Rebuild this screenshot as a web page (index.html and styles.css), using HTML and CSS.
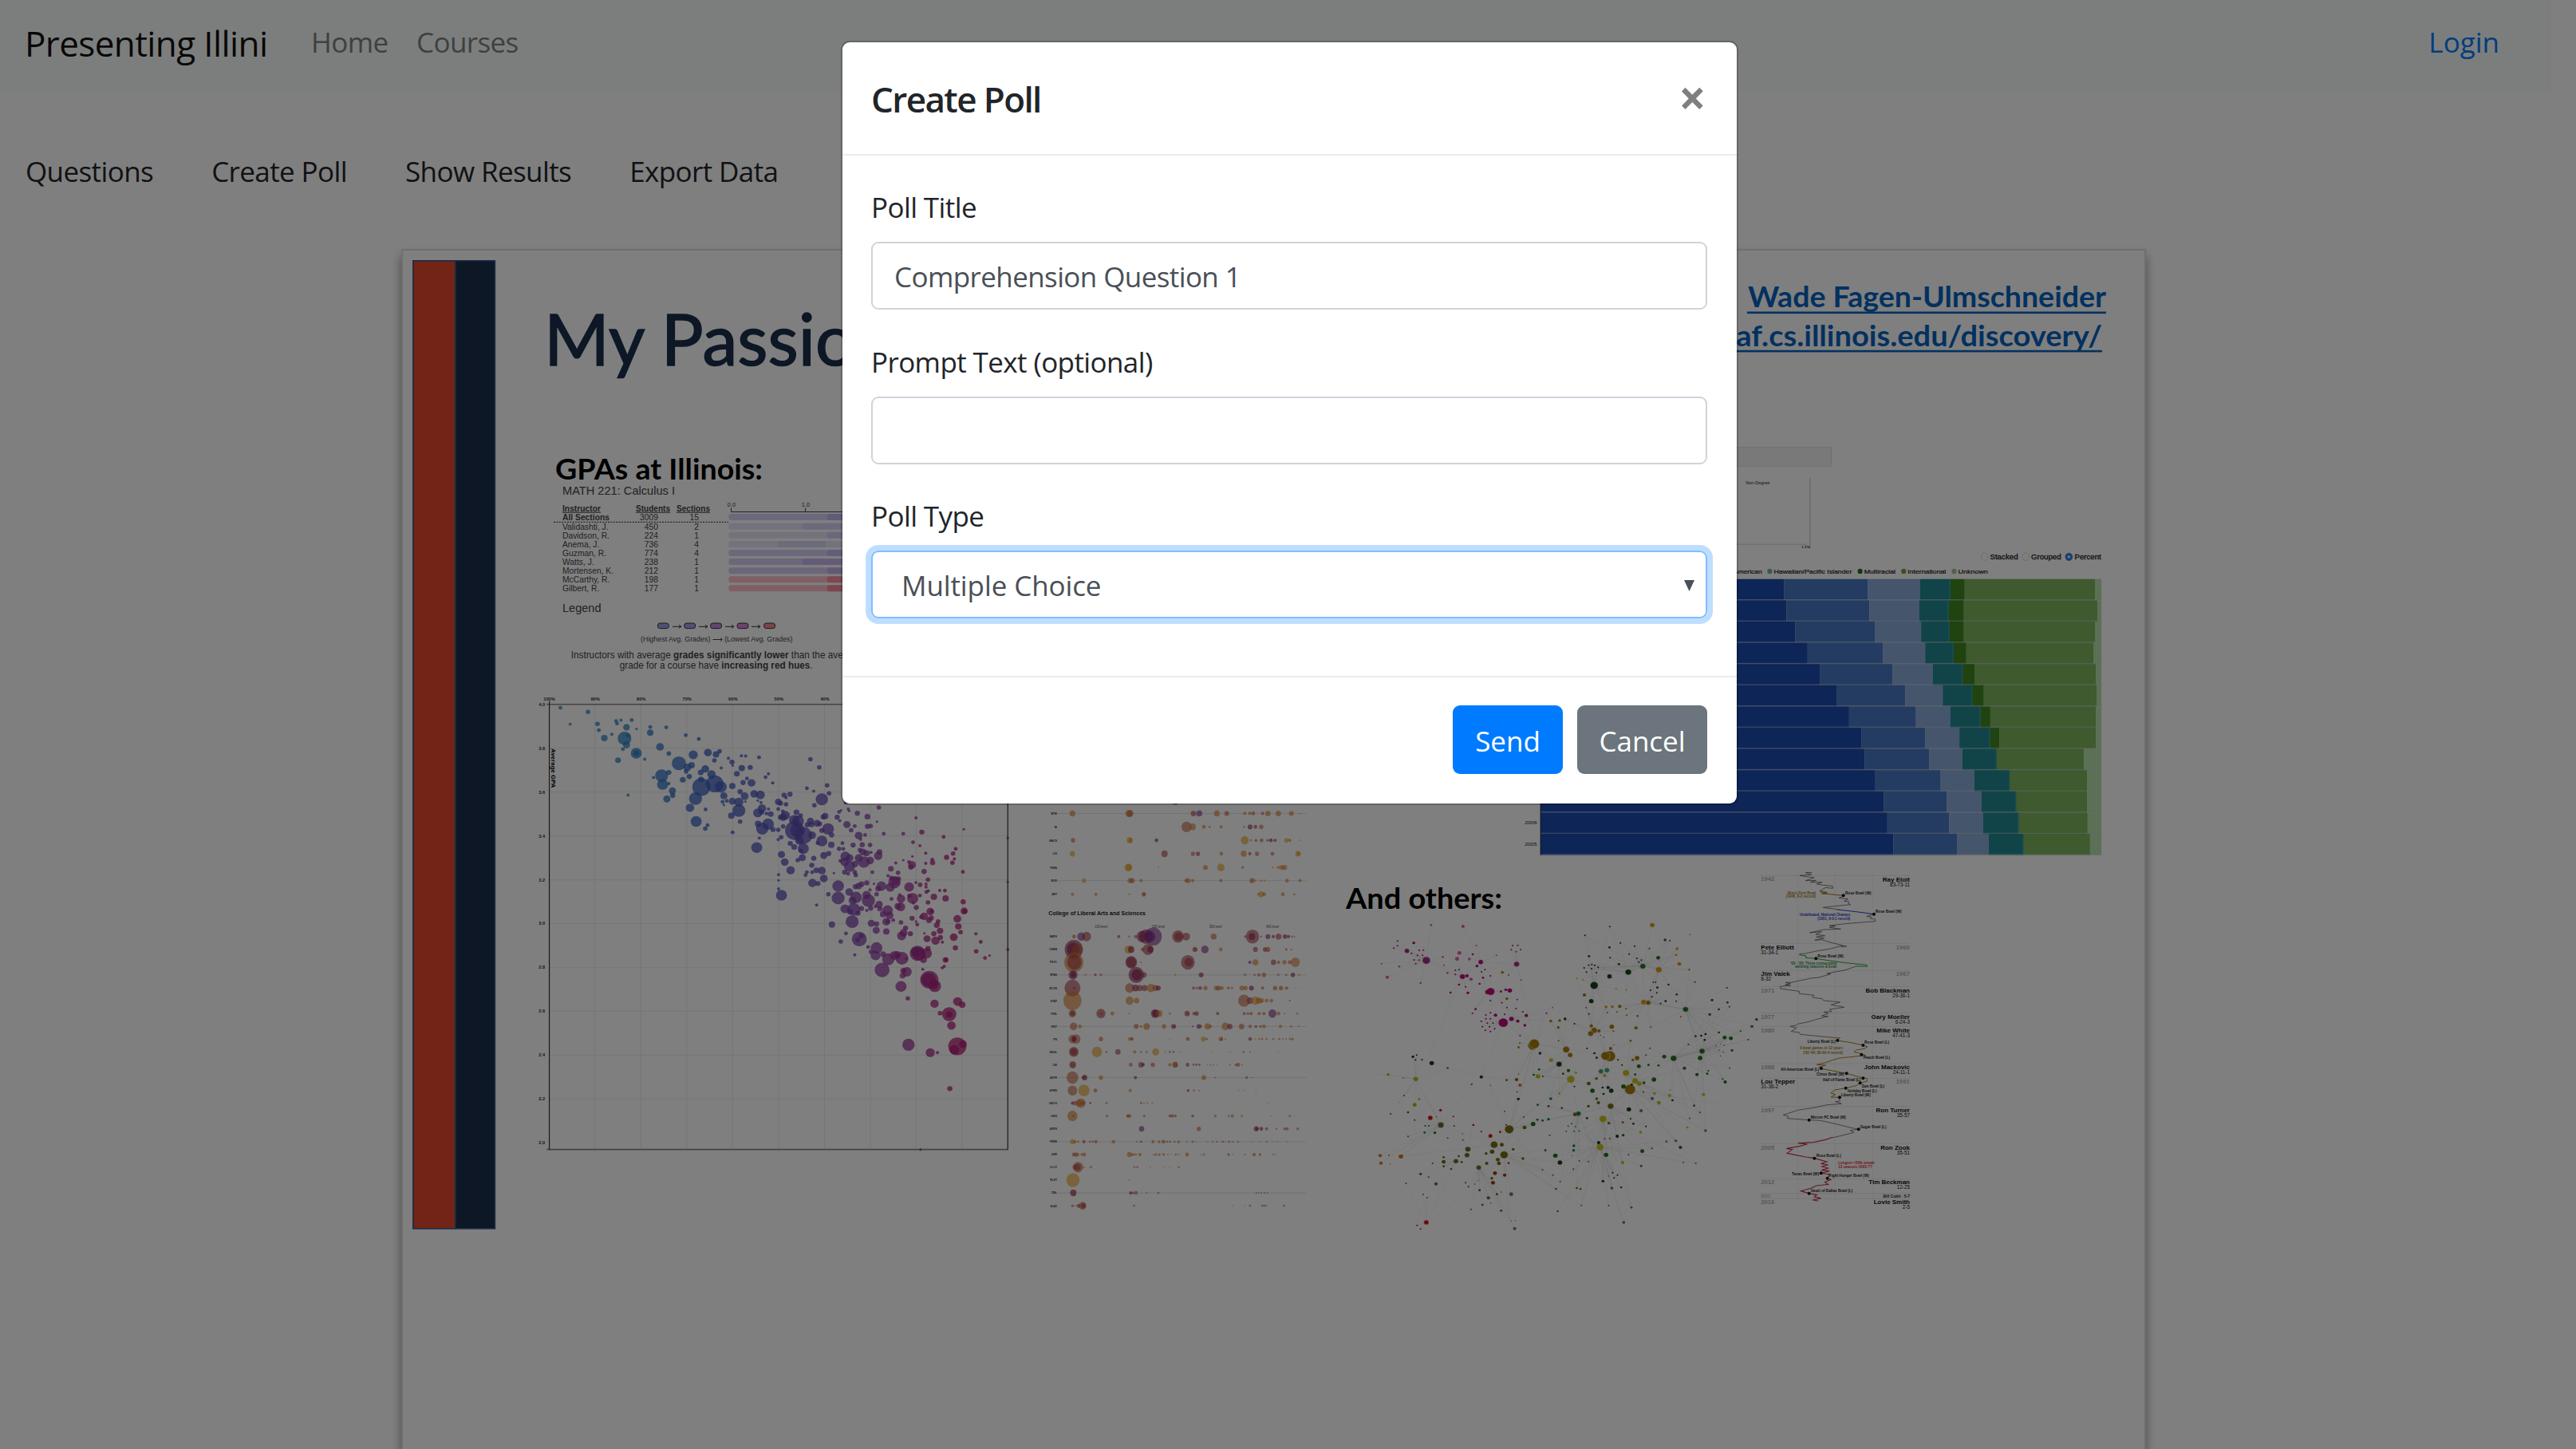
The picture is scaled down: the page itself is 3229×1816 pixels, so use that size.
FILE: index.html
```html
<!DOCTYPE html>
<html lang="en">
<head>
<meta charset="utf-8">
<title>Presenting Illini</title>
<link rel="stylesheet" href="styles.css">
</head>
<body>
<nav class="navbar">
  <a class="brand">Presenting Illini</a>
  <a class="nav-link">Home</a>
  <a class="nav-link">Courses</a>
  <a class="login">Login</a>
</nav>
<div class="tabs">
  <a>Questions</a>
  <a>Create Poll</a>
  <a>Show Results</a>
  <a>Export Data</a>
</div>
<main class="slide">
<svg class="canvas" viewBox="505 314 2183 1502" width="2183" height="1502">
  <rect x="517.8" y="326.8" width="53" height="1213" fill="#e5482d" stroke="#35598a" stroke-width="1.6"/>
  <rect x="571" y="326.8" width="49.4" height="1213" fill="#1a2f4b" stroke="#35598a" stroke-width="1.6"/>

  <g class="calibri">
    <text x="682" y="458" font-size="90" fill="#1a2f4b" stroke="#1a2f4b" stroke-width="1.6" textLength="390" lengthAdjust="spacingAndGlyphs">My Passio</text>
    <g font-weight="700">
      <text x="696" y="601" font-size="35.4" textLength="260" lengthAdjust="spacingAndGlyphs">GPAs at Illinois:</text>
      <text x="1687" y="1138.7" font-size="35.4" textLength="196" lengthAdjust="spacingAndGlyphs">And others:</text>
      <g fill="#0563c1" font-size="36">
        <text x="2191" y="385" textLength="449" lengthAdjust="spacingAndGlyphs">Wade Fagen-Ulmschneider</text>
        <text x="2146" y="433.8" textLength="489" lengthAdjust="spacingAndGlyphs">waf.cs.illinois.edu/discovery/</text>
        <rect x="2190" y="390.5" width="450" height="2.6"/>
        <rect x="2148" y="438.8" width="487" height="2.6"/>
      </g>
    </g>
  </g>

  <g class="arial" id="gpa" fill="#444">
    <text x="705" y="620" font-size="15" textLength="141" lengthAdjust="spacingAndGlyphs">MATH 221: Calculus I</text>
    <g font-size="10.5" font-weight="700" text-decoration="underline">
      <text x="705" y="640.7" textLength="48" lengthAdjust="spacingAndGlyphs">Instructor</text>
      <text x="797" y="640.7" textLength="43" lengthAdjust="spacingAndGlyphs">Students</text>
      <text x="848" y="640.7" textLength="42" lengthAdjust="spacingAndGlyphs">Sections</text>
    </g>
    <path d="M694 654.3H913" stroke="#222" stroke-width="1" stroke-dasharray="2 1.4"/>
    <path d="M916.5 636.5V641.5H1080M1009.6 636.5V641.5" stroke="#444" stroke-width="1" fill="none"/>
    <g font-size="7.5" text-anchor="middle"><text x="917" y="635">0.0</text><text x="1010" y="635">1.0</text></g>
    <text x="705" y="767" font-size="14.6" textLength="48.5" lengthAdjust="spacingAndGlyphs">Legend</text>
    <g stroke="#333" stroke-width="1">
      <rect x="824.4" y="781" width="14" height="6.6" rx="3" fill="#9ea0ec"/>
      <rect x="857.7" y="781" width="14" height="6.6" rx="3" fill="#b09ce6"/>
      <rect x="890.6" y="781" width="14" height="6.6" rx="3" fill="#c88ade"/>
      <rect x="924" y="781" width="14" height="6.6" rx="3" fill="#dc82dc"/>
      <rect x="957.6" y="781" width="14" height="6.6" rx="3" fill="#f48a96"/>
      <path fill="none" d="M843 785.3h11m-3-2l3 2l-3 2M876 785.3h11m-3-2l3 2l-3 2M909 785.3h11m-3-2l3 2l-3 2M942 785.3h11m-3-2l3 2l-3 2"/>
    </g>
    <text x="803" y="804" font-size="9" textLength="190.5" lengthAdjust="spacingAndGlyphs">(Highest Avg. Grades) ⟶ (Lowest Avg. Grades)</text>
    <text x="715.7" y="824.8" font-size="12.2" textLength="341" lengthAdjust="spacingAndGlyphs">Instructors with average <tspan font-weight="700">grades significantly lower</tspan> than the ave</text>
    <text x="776.7" y="837.5" font-size="12.2" textLength="242" lengthAdjust="spacingAndGlyphs">grade for a course have <tspan font-weight="700">increasing red hues</tspan>.</text>
  </g>

  <g class="arial" id="scatter" transform="translate(660 840) scale(.40816 .39542)"></g>
  <g class="arial" id="bubbles" transform="translate(1290 990) scale(.33333 .35075)"></g>
  <g id="network" transform="translate(1660 1060) scale(.35714 .33333)"></g>
  <g class="arial" id="enrollment" transform="translate(1900 530) scale(.5102 .35714)"></g>
  <g class="arial" id="football" transform="translate(2180 1070) scale(.33333)"></g>
</svg>
</main>

<div class="backdrop">
  <section class="modal">
    <header class="modal-header">
      <h5>Create Poll</h5>
      <span class="close">×</span>
    </header>
    <div class="modal-body">
      <label>Poll Title</label>
      <div class="control"><span>Comprehension Question 1</span></div>
      <label>Prompt Text (optional)</label>
      <div class="control"></div>
      <label>Poll Type</label>
      <div class="control select"><span>Multiple Choice</span><svg width="13" height="14" viewBox="0 0 13 14"><path d="M0 0H13L6.5 14Z" fill="#495057"/></svg></div>
    </div>
    <footer class="modal-footer">
      <button class="btn send">Send</button>
      <button class="btn cancel">Cancel</button>
    </footer>
  </section>
</div>
<script src="charts.js"></script>
</body>
</html>
```
FILE: styles.css
```css
* { box-sizing: border-box; }
html, body { margin: 0; height: 1816px; overflow: hidden; }
body {
  background: #fff;
  color: #212529;
  font-family: "Open Sans", "Noto Sans", sans-serif;
  font-stretch: 92%;
  font-size: 35px;
  line-height: 54px;
  letter-spacing: -.6px;
}
.navbar {
  display: flex;
  align-items: center;
  width: 3198px;
  height: 114px;
  padding: 0 65px 8px 31px;
  background: #f8fcfa;
}
.brand { width: 359px; font-size: 44px; color: #111; padding-top: 1px; }
.nav-link { width: 132px; color: #808080; white-space: nowrap; }
.login { margin-left: auto; color: #007bff; letter-spacing: 0; }
.tabs {
  display: flex;
  gap: 73px;
  padding: 74px 0 0 32px;
  height: 198px;
}
.slide {
  width: 2187px;
  height: 1504px;
  margin-left: 503px;
  border: 2px solid #dedede;
  border-bottom: 0;
  box-shadow: 0 9px 12px rgba(0, 0, 0, .42);
}
.canvas { display: block; }
.calibri { font-family: Lato, sans-serif; letter-spacing: 0; }
.arial { font-family: "Liberation Sans", Arial, sans-serif; letter-spacing: 0; }

.backdrop {
  position: absolute;
  inset: 0;
  background: rgba(0, 0, 0, .5);
  display: flex;
  justify-content: center;
  align-items: flex-start;
  padding: 51px 0 0 4px;
}
.modal {
  width: 1125px;
  height: 958px;
  background: #fff;
  background-clip: padding-box;
  border: 2px solid rgba(0, 0, 0, .2);
  border-radius: 11px;
}
.modal-header {
  display: flex;
  justify-content: space-between;
  align-items: center;
  height: 142px;
  padding: 0 39px 0 36px;
  border-bottom: 2px solid #e9ecef;
}
h5 { margin: 0; padding-top: 1px; font-size: 44px; font-weight: 600; letter-spacing: -1.6px; }
.close { padding-bottom: 2px; font-size: 60px; font-weight: 700; color: #7f7f7f; }
.modal-body { display: flex; flex-direction: column; height: 652px; padding: 36px 37px 0 36px; }
label { height: 72px; padding-top: 2px; }
.control {
  display: flex;
  align-items: center;
  justify-content: space-between;
  height: 85px;
  margin-bottom: 36.5px;
  padding: 2px 14px 0 27px;
  border: 2px solid #ced4da;
  border-radius: 9px;
  color: #495057;
}
.select { padding-left: 36px; border-color: #80bdff; box-shadow: 0 0 0 7px rgba(0, 123, 255, .25); letter-spacing: -.1px; }
.modal-footer {
  display: flex;
  justify-content: flex-end;
  gap: 18px;
  padding: 35px 37px 0 36px;
  border-top: 2px solid #e9ecef;
}
.btn {
  height: 86px;
  padding: 4px 0 0;
  border: 0;
  border-radius: 9px;
  color: #fff;
  font: inherit;
}
.send { width: 138px; background: #007bff; }
.cancel { width: 163px; background: #6c757d; }
```
FILE: charts.js
```js
const NS = 'http://www.w3.org/2000/svg';
function add(parent, tag, attrs, text) {
  const el = document.createElementNS(NS, tag);
  for (const k in attrs) el.setAttribute(k, attrs[k]);
  if (text !== undefined) el.textContent = text;
  parent.appendChild(el);
  return el;
}
const $ = id => document.getElementById(id);
const triples = s => s.trim().split(/\s+/).map(t => t.split(','));

// Instructor table
[['All Sections', 3009, 15, 651.8, 1036.8, '#d8d0fa', '#c0b6f6'],
 ['Validashti, J.', 450, 2, 663.6, 1005.7, '#e6e4fa', '#d6d4fa'],
 ['Davidson, R.', 224, 1, 674.6, 1036.8, '#e6e4fa', '#d4d0fa'],
 ['Anema, J.', 736, 4, 685.7, 975.4, '#e6e4fa', '#d8d6f8'],
 ['Guzman, R.', 774, 4, 696.8, 1036.8, '#d8d0f8', '#c6b8f6'],
 ['Watts, J.', 238, 1, 707.9, 1005.7, '#d8ccf4', '#ccb4f2'],
 ['Mortensen, K.', 212, 1, 719, 1036.8, '#daccf4', '#cab0ee'],
 ['McCarthy, R.', 198, 1, 730, 1036.8, '#fcc0cc', '#fa90a2'],
 ['Gilbert, R.', 177, 1, 741, 1036.8, '#fcc0c8', '#fa8c9c']
].forEach((r, i) => {
  const g = $('gpa'), y = r[3];
  add(g, 'text', { x: 705, y, 'font-size': 10.3, 'font-weight': i ? 400 : 700 }, r[0]);
  add(g, 'text', { x: 825, y, 'font-size': 10.3, 'text-anchor': 'end' }, r[1]);
  add(g, 'text', { x: 876, y, 'font-size': 10.3, 'text-anchor': 'end' }, r[2]);
  add(g, 'rect', { x: 913.4, y: y - 7.8, width: 170, height: 8, rx: 3, fill: r[5] });
  add(g, 'rect', { x: r[4], y: y - 7.8, width: 60, height: 8, rx: 3, fill: r[6] });
});

// GPA scatter
(() => {
  const g = $('scatter');
  for (let i = 1; i < 10; i++) add(g, 'path', { d: `M${69 + 141 * i} 108V1519`, stroke: '#eee', 'stroke-width': 3 });
  for (let i = 1; i < 10; i++) add(g, 'path', { d: `M69 ${108 + 139 * i}H1479`, stroke: '#eee', 'stroke-width': 3 });
  add(g, 'path', { d: 'M62 108H1479M62 1519H1479', stroke: '#888', 'stroke-width': 4 });
  add(g, 'path', { d: 'M70 98V1519M1478 108V1519', stroke: '#333', 'stroke-width': 3 });
  ['100%', '90%', '80%', '70%', '60%', '50%', '40%'].forEach((t, i) =>
    add(g, 'text', { x: 70 + 141 * i, y: 96, 'font-size': 14, 'font-weight': 700, 'text-anchor': 'middle', fill: '#333' }, t));
  for (let i = 0; i < 11; i++)
    add(g, 'text', { x: 57, y: 113 + 139 * i, 'font-size': 14, 'font-weight': 700, 'text-anchor': 'end', fill: '#333' }, (4 - .2 * i).toFixed(1));
  add(g, 'text', { transform: 'translate(75 248) rotate(90)', 'font-size': 19, 'font-weight': 700, textLength: 125, lengthAdjust: 'spacingAndGlyphs' }, 'Average GPA');
  const stops = [[300, 41, 129, 190], [560, 56, 91, 190], [850, 90, 75, 180], [1100, 145, 60, 160], [1300, 175, 28, 115], [1500, 182, 20, 105]];
  const color = x => {
    if (x <= 300) return 'rgb(41,129,190)';
    let i = 1;
    while (stops[i][0] < x) i++;
    const a = stops[i - 1], b = stops[i], t = (x - a[0]) / (b[0] - a[0]);
    return `rgb(${[1, 2, 3].map(k => Math.round(a[k] + (b[k] - a[k]) * t))})`;
  };
  triples(`
104,119,6 134,171,5 189,132,7 218,170,7 222,190,6 239,215,10 262,203,5 281,285,9 275,161,6 278,169,6 290,158,5 323,158,6 307,181,10 338,186,4 312,207,7 301,216,21 307,236,11 296,250,6 337,263,17 337,263,9 363,282,5 312,396,5 380,180,6 380,198,10 429,181,6 489,206,6 529,218,6 410,243,12 437,264,7 390,340,5 415,334,20 418,362,17 437,324,8 448,382,11 449,397,8 431,408,11 437,359,5 468,295,22 512,268,14 507,301,10 494,308,12 490,321,7 480,347,9 500,337,8 557,261,12 582,267,10 593,257,7 577,286,7 598,310,5 549,313,12 535,324,9 568,330,13 536,346,9 537,370,28 578,360,27 597,370,18 519,407,20 502,436,13 521,479,17 550,441,6 556,491,6 549,502,7 606,398,11 602,417,6 606,427,4 615,414,6
620,279,5 631,291,8 633,302,4 661,310,10 660,271,5 673,272,5 714,276,6 687,308,8 646,328,9 677,343,6 665,356,8 691,357,12 632,367,10 656,385,8 670,399,12 632,415,11 652,418,14 652,445,20 629,461,10 656,480,7 633,514,6 672,416,4 699,392,12 718,395,14 710,413,4 720,419,5 734,339,6 743,328,5 756,357,5 723,438,13 710,452,14 722,450,8 743,440,5 737,454,6 750,456,9 711,487,10 724,502,19 742,488,18 757,505,8 773,506,7 707,562,17 715,532,5 773,440,6 773,417,10 780,422,8 791,396,8 809,393,8 797,404,5 797,425,7 787,447,6 795,460,14 788,466,12 780,466,8 788,495,7 773,537,5 782,529,7 810,549,8 783,584,11 793,608,12 811,634,13 774,648,5 774,666,4 774,693,5 783,713,17
872,282,7 899,308,7 861,374,6 882,383,5 923,365,7 929,390,7 907,409,19 884,428,7 829,450,9 842,460,7 822,475,16 834,478,18 824,508,30 830,508,20 850,524,27 838,540,13 872,478,11 875,489,9 892,485,11 900,487,8 911,465,8 917,462,10 862,490,8 877,523,12 907,508,8 926,503,18 937,522,8 907,541,17 894,548,6 936,553,10 850,565,17 822,560,9 843,572,7 847,594,11 833,602,7 882,596,8 876,618,8 913,587,11 928,581,8 878,674,13 895,676,8 913,660,12 907,635,12 890,634,9 877,640,6 861,640,6 857,649,6 927,710,7 891,744,5 944,643,4 938,806,10 965,860,7
954,466,8 962,477,5 960,449,6 966,444,4 980,420,6 988,440,5 991,446,4 1016,453,8 1047,464,9 1082,435,7 1076,480,4 984,489,11 997,507,7 1008,494,6 1047,495,8 1057,494,7 1020,524,12 1040,522,6 1026,536,5 970,548,6 960,566,7 973,566,6 1003,554,8 1031,553,8 1055,554,7 1024,570,7 1033,576,11 1044,580,10 1058,577,5 1084,576,9 1080,588,13 979,590,15 992,595,12 964,604,6 977,608,13 992,622,17 1020,595,12 1036,608,18 1055,603,12 1009,614,10 977,640,8 988,645,6 1008,640,7 1011,649,7 1062,640,6 957,684,18 957,722,20 991,703,12 1012,720,18 1001,730,12 1044,712,13 1050,730,20 1010,686,8 1020,684,10 1029,678,9 1045,674,8 1055,696,5 1067,677,4 1075,710,7 1080,692,9 1090,684,15 978,756,14 1005,758,20 993,765,9 1018,770,8 1029,755,8 1045,761,5 1057,754,8 1072,748,6 1083,742,11 1085,756,8 1000,797,20 1095,773,10 1109,761,16 1115,777,12 1059,802,11 1075,804,8 1105,797,12 1110,796,7 1126,792,6 1074,824,11 1105,828,10 1022,852,23 1028,842,8 1017,855,7 981,834,6 1008,902,5 1049,877,6 1075,880,18 1058,893,7 1072,904,15 1095,900,9 1111,916,19 1130,904,14 1138,902,12 1153,913,20 1166,914,5 1092,950,23 1157,952,9 1168,956,15 1155,968,9 1150,1002,17 1171,1040,7 1173,1187,19
1097,518,6 1157,518,6 1196,468,5 1214,513,8 1281,528,6 1343,504,4 1187,545,6 1208,556,5 1226,580,5 1185,590,4 1134,611,5 1119,629,9 1141,642,7 1157,602,4 1175,608,6 1184,617,12 1180,624,8 1221,638,8 1226,612,5 1246,600,6 1247,610,8 1290,593,8 1310,581,7 1318,566,6 1314,598,5 1308,610,7 1340,639,6 1110,651,5 1120,658,7 1143,660,7 1130,672,19 1133,668,14 1117,688,14 1175,687,15 1196,673,5 1209,680,7 1227,678,5 1233,664,7 1227,687,5 1234,699,5 1228,703,6 1269,698,5 1285,698,6 1287,723,10 1251,718,10 1233,736,7 1208,714,6 1186,723,17 1176,715,7 1150,724,13 1146,712,5 1121,725,6 1149,750,14 1140,748,10 1197,752,8 1188,738,5 1240,765,12 1244,764,6 1221,780,12 1213,782,7 1236,792,9 1243,785,8 1184,786,8 1196,796,4 1200,806,6 1150,799,7 1164,817,8 1158,832,12 1152,842,14 1179,835,8 1222,834,4 1251,835,8 1264,796,7 1260,808,9 1270,826,10 1271,847,8 1230,851,11 1256,857,13 1277,862,5 1323,788,12 1326,812,10 1333,830,7 1312,846,12 1317,880,8 1341,734,8 1344,763,11 1346,764,7 1380,835,5 1395,861,6 1381,891,7 1408,912,6 1422,904,4 1478,532,4 1478,671,4 1478,885,5
1201,897,24 1206,899,20 1196,892,16 1229,897,16 1219,917,11 1233,882,8 1287,918,9 1288,918,6 1283,938,5 1277,943,5 1217,948,5 1237,981,28 1235,981,22 1254,1001,19 1250,997,15 1253,1057,13 1324,1050,14 1338,1060,10 1298,1090,22 1298,1091,10 1270,1087,7 1305,1126,13 1323,1192,28 1314,1203,15 1340,1185,12 1240,1212,14 1262,1212,5 1300,1326,8 1210,1519,4`)
    .forEach(([x, y, r]) => add(g, 'circle', { cx: x, cy: y, r, fill: color(+x), 'fill-opacity': .75 }));
})();

// Course bubbles by department
(() => {
  const g = $('bubbles');
  const hue = { y: '#e8a020', o: '#d87c28', b: '#c4603c', r: '#a83c48', m: '#8c1c4c', p: '#7a2c84' };
  const rows = {
    84: 'BTW| 163,11,o 375,13,o 380,12,b 618,10,r 640,11,p 706,11,o 743,9,b 811,6,o 830,6,o 843,7,b 878,6,b 898,10,o 937,10,o 986,9,o 1018,3,y',
    132: 'IB| 592,19,b 615,12,o 657,7,o 679,4,b 722,6,o 808,4,o 831,9,m 851,7,r 873,8,b',
    180: 'MACS| 165,8,b 378,11,y 381,8,y 479,7,p 811,15,y 834,3,r 853,5,r 874,7,b 896,5,b 909,7,m 925,6,r 967,8,y 980,6,o 1018,3,y',
    228: 'LIS| 163,10,y 509,12,r 616,8,b 635,8,r 723,7,o 807,11,o 830,6,r 857,8,b 915,7,b 1011,10,y 1014,7,y',
    277: 'THEA| 373,14,y 376,11,y 486,3,y 663,9,o 721,14,y 803,5,o 915,3,o 937,6,y 950,8,o 961,9,o',
    324: 'MUS| 206,8,y 379,9,o 388,9,b 421,6,o 590,6,b 598,9,o 615,6,o 721,6,o 838,9,b 850,5,y 872,4,y 885,4,y 970,7,o 1018,6,o',
    373: 'ART| 163,6,o 251,6,o 376,3,o 431,8,b 433,5,b 862,5,y 872,11,y 884,7,o 954,7,o 997,4,o',
    524: 'MATH| 169,7,b 196,15,p 216,17,r 337,6,r 376,4,o 400,6,b 424,20,m 440,26,m 455,20,p 467,32,p 560,22,r 562,15,r 591,14,r 694,11,b 813,5,b 840,25,r 838,12,m 872,3,m 898,9,m 918,6,m 938,11,r 962,8,m 975,6,m 988,4,b 998,3,b',
    570: 'CHEM| 168,34,m 166,24,m 182,20,b 374,15,y 384,12,m 427,7,b 447,20,r 456,12,m 623,9,r 627,6,b 661,14,p 721,7,o 851,9,r 887,8,r 898,9,b 967,4,r 986,3,r',
    616: 'PSYC| 168,36,o 170,27,r 384,22,m 384,18,r 421,3,b 597,26,r 600,16,r 830,6,p 851,11,o 919,10,r 938,6,b 960,8,o 980,7,b 1001,17,o',
    661: 'SPAN| 165,17,m 166,10,m 212,4,y 249,5,r 270,5,b 403,29,m 405,20,m 432,10,r 550,4,y 647,9,m 812,5,o 848,4,b 864,6,b 883,8,b 937,4,b 967,4,b 992,8,m 1016,4,y',
    708: 'ECON| 163,30,r 170,5,r 378,17,b 400,12,m 416,11,r 434,11,r 458,15,o 475,11,b 486,9,m 618,6,b 630,4,r 643,7,r 663,8,o 703,8,o 712,9,b 725,7,o 749,5,b 763,4,b 800,9,o 814,8,o 836,9,m 878,6,b 925,8,b 947,8,b 968,6,b 1001,2,o 1014,2,o',
    753: 'STAT| 163,34,o 378,15,o 404,10,o 808,22,b 831,12,r 851,15,y 864,11,o 875,8,o 893,7,o 911,7,o 980,3,r',
    799: 'PHIL| 163,14,b 163,9,r 270,17,r 272,6,b 313,7,o 376,3,o 474,16,m 476,12,m 489,12,o 529,4,o 594,10,r 597,6,b 620,6,r 630,8,r 709,6,r 809,6,b 823,5,b 835,6,b 865,6,b 883,6,b 915,15,p 938,7,o 960,3,o 1008,4,o',
    845: 'HIST| 167,14,b 191,7,o 403,9,b 421,5,o 442,12,o 507,8,o 543,9,r 547,5,r 615,3,r 638,8,p 645,6,b 671,11,o 682,6,o 738,14,o 755,10,r 799,10,b 831,6,b 853,5,r 870,5,b 883,7,o 945,6,o 985,4,o 1014,3,y',
    890: 'PS| 163,15,b 176,17,b 169,9,m 270,8,b 378,7,y 386,6,r 529,2,o 597,7,b 655,9,y 668,4,b 721,8,o 724,5,b 738,3,o 831,7,r 850,3,y 865,4,y 876,4,o 893,4,o 918,4,o 940,4,o 954,3,o 967,3,o 981,4,o 990,5,o',
    936: 'ENGL| 168,18,r 168,13,r 255,19,y 291,4,b 334,10,r 397,6,o 421,4,o 442,4,o 476,13,y 512,2,b 529,4,b 543,4,b 567,2,b 685,2,o 757,2,b 806,4,b 831,3,o 937,2,o',
    982: 'CW| 164,13,r 164,8,b 382,7,b 421,10,r 429,6,p 465,8,b 529,6,o 549,11,b 551,7,b 596,7,r 618,4,b 629,4,r 640,4,r 670,2,o 681,3,o 692,3,o 706,2,o 755,3,b 778,5,b 786,7,b 800,3,o',
    1028: 'ASTR| 163,22,b 209,10,m 205,7,r 270,8,o 400,6,p 657,9,o 700,3,b 818,5,b 838,2,b',
    1074: 'ATMS| 163,18,b 206,21,y 249,7,b 380,6,o 598,5,m 620,4,o 640,3,o 788,2,o 810,2,o 853,2,b',
    1119: 'GEOG| 163,6,m 172,8,b 188,12,b 195,17,o 203,8,b 230,4,r 291,4,b 421,4,b 432,3,o 445,3,b 463,3,o 900,2,o',
    1165: 'LING| 163,19,o 166,4,b 293,5,o 371,6,r 378,7,o 433,5,o 530,5,r 539,6,b 550,5,b 615,5,r 700,5,o 750,4,o 764,6,o 800,4,o 909,2,b 980,4,b 998,2,b',
    1211: 'ANTH| 423,10,p 638,8,b 854,9,m 857,6,m 873,7,m 893,6,b 930,3,r 961,5,b 970,6,b 1010,5,b',
    1257: 'FREN| 163,9,y 172,6,o 184,4,b 206,6,r 229,4,b 240,4,b 251,6,b 317,7,o 404,3,o 421,4,r 466,6,o 489,5,b 505,7,b 519,4,b 530,4,b 547,4,o 562,5,b 593,3,o 615,4,b 625,2,b 671,2,b 690,3,b 706,3,b 728,4,b 738,2,b 752,4,b 766,3,b 786,4,o 839,2,o 868,2,b 893,3,b 915,2,o 930,2,b 971,2,b',
    1303: 'GER| 168,7,b 177,8,b 184,5,o 198,5,o 207,7,o 377,9,o 388,5,b 397,4,b 404,3,o 417,6,o 468,3,o 477,5,o 490,5,o 506,5,o 522,3,o 534,2,o 551,4,o 562,3,o 594,7,o 647,2,o 657,4,o 750,5,b 765,2,b 811,3,b 846,6,b 868,5,b 915,3,o 925,3,o',
    1348: 'CLCV| 172,9,b 182,12,m 184,19,b 206,4,y 232,5,o 396,4,o 407,4,b 455,2,b 507,2,b 529,2,b 563,4,b',
    1394: 'RLST| 165,25,y 376,3,y',
    1440: 'ITAL| 166,12,m 168,8,b 382,6,m 391,5,b 402,7,b 442,3,b 486,4,b 854,3,b 863,3,b 874,3,b 885,3,b 896,3,b',
    1486: 'SLAV| 163,5,b 173,3,b 186,7,r 201,14,b 204,9,r 395,4,b 765,2,b 811,2,b 831,4,b 877,4,b 885,4,b 894,3,b 958,4,b'
  };
  [84, 324, 661, 845, 1028, 1257, 1440].forEach(y => add(g, 'path', { d: `M108 ${y}H1042`, stroke: '#dcdcdc', 'stroke-width': 2.4 }));
  for (const y in rows) {
    const [name, pts] = rows[y].split('|');
    add(g, 'text', { x: 105, y: +y + 4, 'font-size': 10, 'font-weight': 700, 'text-anchor': 'end', fill: '#333' }, name);
    triples(pts).forEach(([x, r, c]) => add(g, 'circle', { cx: x, cy: y, r, fill: hue[c], 'fill-opacity': .6 }));
  }
  add(g, 'text', { x: 73, y: 448, 'font-size': 19, 'font-weight': 700, textLength: 365, lengthAdjust: 'spacingAndGlyphs', fill: '#222' }, 'College of Liberal Arts and Sciences');
  [[271, '100'], [486, '200'], [701, '300'], [915, '400']].forEach(([x, t]) =>
    add(g, 'text', { x, y: 493, 'font-size': 14, 'text-anchor': 'middle', textLength: 48, lengthAdjust: 'spacingAndGlyphs', fill: '#555' }, t + '-level'));
  add(g, 'circle', { cx: 550, cy: 42, r: 12, fill: hue.b, 'fill-opacity': .6 });
})();

// Course network
(() => {
  const g = $('network');
  const hue = { k: '#b80c78', n: '#a03080', v: '#e060a8', d: '#1c4018', g: '#286c20', e: '#108050', o: '#a87c10', y: '#c8bc20', l: '#a0c010', w: '#d89c10', t: '#489878', u: '#746c10', s: '#686828', r: '#d01818', b: '#8c4010', q: '#e07018', c: '#707880' };
  const nodes = triples(`
375,298,4,v 487,303,6,v 257,358,3,k 257,376,3,k 244,385,3,k 314,365,5,k 290,395,8,n 358,431,14,n 306,404,3,k 327,412,3,k 333,393,3,k 348,392,3,k 345,412,3,k 315,429,3,k 333,430,3,k 321,443,3,k 201,443,3,v 263,454,4,v 221,494,6,v 338,516,4,v 416,418,4,v 420,449,3,v 432,478,4,v 474,403,7,v 466,425,7,v 509,426,5,v 521,408,4,k 533,375,3,v 549,437,9,k 536,452,5,k 604,412,3,v 675,445,10,n 661,375,3,n 679,374,3,n 656,391,3,n 689,390,3,n 673,398,3,n 460,468,3,k 473,466,3,k 460,484,3,k 485,492,10,k 501,489,6,k 515,502,6,v 552,474,3,k 564,466,3,k 557,496,4,k 583,489,3,k 473,522,4,k 496,530,3,k 545,519,4,k 443,552,4,k 504,553,5,k 573,550,9,k 584,548,14,k 574,550,8,k 620,548,4,k 637,541,5,k 651,544,8,k 625,476,5,o 647,486,3,o 691,505,3,v 641,575,5,o 583,582,3,k 677,578,3,n 641,608,3,n 623,590,3,k 601,637,6,k 583,628,3,k 567,636,3,k 531,614,4,k 520,630,3,k 551,660,3,k 555,680,3,k 565,694,3,k 583,698,3,k 598,688,3,k 572,667,3,k 592,667,3,k 583,650,3,k 567,650,3,k 580,680,3,k 633,634,3,k 628,665,17,k 657,651,9,k 679,659,6,k 709,638,6,k 704,675,5,k 697,624,3,k 673,612,3,k 687,714,3,n
1151,298,8,w 1002,304,3,d 1283,334,3,y 915,337,3,d 1196,354,5,g 1213,356,3,g 1001,382,4,d 1039,365,3,d 1089,377,3,d 1141,386,3,g 1238,387,5,w 1235,410,4,w 929,415,4,d 1003,421,3,d 1070,407,3,d 1172,421,7,g 1246,444,7,w 1034,445,4,d 1067,475,11,d 1118,453,10,g 1174,466,11,w 1281,466,3,g 1001,491,8,d 947,525,14,d 937,584,8,d 912,459,3,d 928,449,3,d 939,446,3,d 949,450,3,d 961,457,3,d 920,475,3,d 938,462,3,d 955,477,3,d 886,499,3,y 909,503,3,y 1097,423,3,d 1113,430,3,d 1104,437,3,d 1155,513,3,g 1163,513,3,g 1208,522,4,g 1301,512,3,g 1169,533,4,d 1145,543,3,d 1167,553,3,d 1150,568,3,d 1198,584,4,d 1237,559,4,g 1235,584,3,g 1180,593,3,d 913,561,6,o 1024,538,3,y 1060,542,3,y 1121,588,10,w 1137,590,9,o 989,606,5,w 1011,605,5,w 1037,604,6,o 1059,613,3,o 919,608,3,o 929,632,3,d 994,627,3,o 1027,625,3,o 1061,637,3,o 1099,640,4,o 1268,615,10,g 1361,580,5,g 1353,634,5,g 1415,589,4,g 1385,615,4,g 1413,534,3,g 1422,605,3,g 1251,643,3,o
780,629,3,k 801,608,3,w 845,651,5,d 826,657,5,o 795,659,5,o 821,683,5,o 878,669,3,d 937,677,6,o 947,694,11,o 935,706,10,o 964,696,6,o 1009,680,8,o 1015,697,3,o 1094,685,6,o 1146,682,3,c 970,712,2,u 981,720,2,k 1017,748,2,k 1075,733,4,o 822,733,3,o 737,745,18,o 686,742,3,o 682,758,4,o 757,780,5,d 849,766,12,o 863,787,9,o 1002,791,20,o 987,790,16,o 1005,762,6,o 948,780,4,d 956,797,4,d 922,762,3,d 1098,798,8,o 1083,805,5,o 1129,787,3,u 1143,761,3,u 796,806,7,y 824,821,10,d 754,841,4,g 857,845,6,g 883,853,4,y 838,857,4,g 971,848,9,t 992,844,9,t 984,864,6,y 1031,805,3,d 1045,824,3,d 1059,854,12,y 1091,860,4,g 1104,829,7,g 1138,824,4,g 1173,826,4,g 1193,793,7,g 1226,799,11,g 1264,836,6,g 1326,772,10,g 1319,798,8,g 1278,747,3,g 1303,716,4,g 1323,714,4,d 1338,708,4,d 1335,730,4,d 1385,702,4,g 1405,721,7,g 1427,724,7,g 1461,697,3,g 1501,679,5,g 1517,653,5,g 1488,729,3,g 1431,769,5,n 1376,752,2,k 1391,745,2,g 1404,750,2,k 1386,768,2,k 1401,776,2,g 1391,790,2,g 1423,836,3,c 1308,860,6,g 1344,857,4,g 1348,846,3,g 1407,888,6,g 1398,877,3,g
735,861,4,g 750,867,8,y 767,867,3,g 865,878,14,y 928,894,7,u 955,875,5,u 1091,884,11,y 1105,894,8,y 1122,891,5,g 1157,879,8,g 1073,916,19,o 1050,905,8,g 1079,898,4,d 996,909,6,d 1007,921,8,d 977,909,4,d 941,921,8,g 980,933,4,d 825,931,4,y 878,905,3,d 956,951,5,u 962,966,6,u 1005,979,11,u 978,1027,13,y 1159,931,5,y 1212,939,6,y 1151,950,6,c 1174,966,7,y 1222,957,4,d 1331,935,6,y 1298,977,4,g 1214,919,2,u 1120,926,3,u 1112,996,6,c 1069,991,8,d 1075,1027,3,d 1048,1040,4,u 1085,1045,4,d 1129,1055,3,d 1110,1077,5,y 999,1043,5,u 922,1024,4,d 892,1007,9,e 880,1010,7,u 927,979,5,u 834,986,4,u 787,979,4,b 795,951,5,e 749,974,4,e 681,952,5,d 700,1020,3,u 703,1059,7,u 733,1046,8,g 748,1030,4,g 766,1033,4,g 787,1028,5,e 640,881,4,s 675,879,6,u 687,900,6,q 677,925,3,q 682,858,2,u 633,998,3,c
311,793,5,d 324,787,3,d 320,805,3,d 343,804,3,d 377,817,8,d 433,836,4,c 551,869,6,d 517,897,4,q 583,901,3,y 224,860,5,l 321,877,9,l 277,873,3,l 317,974,7,l 333,953,4,l 263,965,2,y 280,939,3,n 294,1002,4,r 233,1008,3,r 317,1031,3,r 372,1023,8,r 408,994,5,r 394,1019,2,r 453,1018,3,r 409,1050,11,s 352,1078,4,e 388,1079,5,e 367,1053,3,e 354,1053,3,e 294,1093,3,e 433,1099,3,c 456,1053,3,n 486,1106,3,s 485,1083,3,y 523,1050,4,r 551,1075,3,b 583,1091,7,r 617,1076,4,r 638,1049,3,r 649,1066,16,u 596,1124,13,u 623,1124,7,u 631,1162,14,u 589,1150,8,u 568,1157,5,u 609,1180,7,u 613,1194,7,u 570,1194,6,u 647,1193,4,u 663,1141,5,u 697,1176,5,u 504,1141,10,s 501,1163,9,s 462,1186,9,s 542,1210,9,s 419,1188,7,s 419,1171,4,s 472,1167,4,s 482,1189,4,s 445,1215,4,s 419,1205,4,s 380,1194,3,s 338,1234,5,s 366,1246,3,s 392,1271,6,s 287,1269,3,s 347,1311,3,c 361,1323,3,c 196,1165,6,q 199,1193,6,q 269,1168,8,q 227,1164,3,q 231,1197,2,q 599,1231,7,b 633,1238,6,b 592,1267,7,b 588,1250,5,s 545,1295,4,b 506,1282,3,b 496,1267,3,b 527,1272,2,b 541,1258,2,b 606,1310,4,b 622,1302,2,b 576,1324,6,s 555,1350,4,b 515,1367,3,s 584,1344,2,b 621,1372,4,b 656,1310,7,c 668,1439,6,c 657,1410,2,c 671,1409,2,c 358,1416,9,r 326,1427,3,r 338,1441,3,r
856,1054,3,t 868,1045,3,t 882,1056,3,t 895,1073,3,t 849,1074,3,t 877,1073,3,t 791,1089,3,u 876,1128,5,e 875,1145,5,e 870,1165,2,c 811,1165,8,g 827,1191,8,d 776,1145,4,g 766,1218,3,u 802,1238,3,u 828,1263,3,c 874,1216,3,u 813,1290,4,u 819,1374,4,c 886,1287,4,u 899,1290,4,u 902,1352,3,c 968,1133,13,y 963,1116,6,d 989,1162,8,g 1028,1092,6,d 1049,1088,5,g 984,1102,3,u 1002,1101,3,u 1047,1191,6,y 1068,1162,3,u 1116,1148,7,g 1112,1204,4,g 1150,1138,3,g 1201,1112,4,c 1234,1109,5,c 1250,1134,6,g 1338,1071,5,c 1260,1191,3,c 1304,1194,3,c 1274,1059,4,y 1319,1003,3,u 1282,1025,3,u 1009,1287,5,u 1042,1284,4,g 978,1261,5,d 1017,1249,3,d 1012,1229,3,d 1029,1238,3,d 998,1242,2,u 927,1187,3,u 895,1185,3,u 998,1353,3,u 1078,1360,4,u 1051,1416,5,u`)
    .map(([x, y, r, c]) => ({ x: +x, y: +y, r: +r, c }));
  // each node joins its nearest hubs
  const hubs = nodes.filter(n => n.r >= 9);
  const line = (a, b) => add(g, 'path', { d: `M${a.x} ${a.y}L${b.x} ${b.y}`, stroke: '#d4d4de', 'stroke-width': 1.4, opacity: .45 });
  nodes.forEach((n, i) => {
    hubs.filter(h => h !== n).map(h => [(h.x - n.x) ** 2 + (h.y - n.y) ** 2, h])
      .sort((a, b) => a[0] - b[0]).slice(0, n.x > 730 && i % 2 ? 3 : 1).forEach(p => line(n, p[1]));
  });
  [[737, 745, 628, 665], [737, 745, 1002, 791], [737, 745, 649, 1066], [737, 745, 631, 1162], [737, 745, 675, 445], [377, 817, 551, 869], [551, 869, 675, 879], [321, 877, 409, 1050], [409, 1050, 596, 1124], [358, 1416, 504, 1300], [358, 817, 470, 520], [649, 1066, 892, 1007], [865, 878, 649, 1066], [596, 1124, 269, 1168], [737, 745, 865, 878], [1073, 916, 1338, 1071], [1073, 916, 1226, 799], [1073, 916, 1400, 975], [377, 817, 311, 793], [321, 877, 175, 857], [1268, 615, 1137, 590], [968, 1133, 1042, 1400], [631, 1162, 650, 1430]]
    .forEach(([a, b, c, d]) => line({ x: a, y: b }, { x: c, y: d }));
  add(g, 'circle', { cx: 731, cy: 751, r: 16, fill: hue.o });
  nodes.forEach(n => add(g, 'circle', { cx: n.x, cy: n.y, r: n.r, fill: hue[n.c], stroke: '#fff', 'stroke-width': n.r > 8 ? 1.5 : 0 }));
})();

// Enrollment share by year
(() => {
  const g = $('enrollment');
  add(g, 'rect', { x: 400, y: 85, width: 375, height: 68, rx: 3, fill: '#f2f2f2', stroke: '#dcdcdc', 'stroke-width': 2 });
  add(g, 'path', { d: 'M723 193V440M500 426H713V432', stroke: '#c8c8c8', 'stroke-width': 2.4, fill: 'none' });
  add(g, 'text', { x: 565, y: 217, 'font-size': 14, textLength: 59, lengthAdjust: 'spacingAndGlyphs', fill: '#222' }, 'Non-Degree');
  add(g, 'text', { x: 702, y: 439, 'font-size': 9, 'font-weight': 700, textLength: 21, lengthAdjust: 'spacingAndGlyphs', fill: '#333' }, '1.1%');
  [[1152, 1165, 69, 'Stacked'], [1253, 1266, 74, 'Grouped'], [1359, 1373, 65, 'Percent']].forEach(([cx, x, w, t], i) => {
    add(g, 'ellipse', { cx, cy: 470, rx: 8.5, ry: 13, fill: i === 2 ? '#2f80e8' : '#fff', stroke: i === 2 ? '#2f70d0' : '#ccc', 'stroke-width': 1.6 });
    if (i === 2) add(g, 'ellipse', { cx, cy: 470, rx: 3, ry: 4.5, fill: '#fff' });
    add(g, 'text', { x, y: 479, 'font-size': 25, stroke: '#222', 'stroke-width': .8, textLength: w, lengthAdjust: 'spacingAndGlyphs', fill: '#222' }, t);
  });
  const label = { y: 529, 'font-size': 22, lengthAdjust: 'spacingAndGlyphs', fill: '#222', stroke: '#222', 'stroke-width': .6 };
  add(g, 'text', { ...label, x: 490, textLength: 115 }, 'Asian American');
  [[624, 634, 192, 'Hawaiian/Pacific Islander', '#64b4b4'], [846, 856, 77, 'Multiracial', '#2c6c14'], [953, 963, 94, 'International', '#6ca050'], [1077, 1087, 73, 'Unknown', '#a0c494']].forEach(([cx, x, w, t, f]) => {
    add(g, 'ellipse', { cx, cy: 521, rx: 6, ry: 9, fill: f });
    add(g, 'text', { ...label, x, textLength: w }, t);
  });
  const fills = ['#1c4aae', '#4878c2', '#8aaad8', '#208890', '#408620', '#7cb45c', '#b8e0aa'];
  [[659, 865, 993, 1067, 1103, 1423], [665, 869, 991, 1063, 1101, 1429], [687, 883, 996, 1065, 1101, 1424], [717, 902, 1006, 1075, 1107, 1420], [748, 926, 1025, 1097, 1127, 1425], [788, 957, 1049, 1121, 1150, 1427], [819, 982, 1068, 1141, 1166, 1425], [849, 1006, 1090, 1165, 1188, 1425], [857, 1016, 1097, 1181, 1181, 1396], [882, 1044, 1127, 1213, 1213, 1404], [904, 1059, 1144, 1229, 1229, 1404], [913, 1065, 1148, 1235, 1235, 1405], [928, 1084, 1162, 1247, 1247, 1411]]
    .forEach((cuts, i) => {
      const y = 548 + i * 74.5, e = [61, ...cuts, 1439];
      for (let k = 0; k < 7; k++) {
        add(g, 'rect', { x: e[k], y, width: e[k + 1] - e[k], height: 74.5, fill: fills[k] });
      }
      add(g, 'rect', { x: e[4] - 2, y, width: 3, height: 74.5, fill: '#3c9aa4' });
      add(g, 'rect', { x: 61, y: y + 71, width: 1378, height: 2.8, fill: '#c4ccd4', opacity: .7 });
    });
  add(g, 'path', { d: 'M61 548V1517', stroke: '#222', 'stroke-width': 2 });
  add(g, 'text', { x: 22, y: 1409, 'font-size': 17, textLength: 30, lengthAdjust: 'spacingAndGlyphs', fill: '#222' }, '2006');
  add(g, 'text', { x: 22, y: 1483, 'font-size': 17, textLength: 30, lengthAdjust: 'spacingAndGlyphs', fill: '#222' }, '2005');
})();

// Football coaches timeline
(() => {
  const g = $('football');
  add(g, 'path', { d: 'M221 70V1305M361 70V1305M502 70V1305', stroke: '#ccc', 'stroke-width': 1.5, 'stroke-dasharray': '3 3' });
  [82, 337, 439, 499, 599, 649, 789, 844, 950, 1090, 1222, 1277, 1297].forEach(y =>
    add(g, 'path', { d: `M82 ${y}H642`, stroke: '#d4d4d4', 'stroke-width': 1.5 }));
  const line = (points, stroke, w) => add(g, 'polyline', { points, stroke, 'stroke-width': w || 2, fill: 'none' });
  line('275,70 250,71 272,78 228,82 282,90 250,101 290,100 268,107 312,107 292,114 318,118 352,122 352,130 325,127 303,140 330,145', '#444');
  line('305,143 332,147 310,150 340,152 392,157', '#a08020', 3);
  line('392,160 375,166 410,170 395,178 413,180 410,186 419,191 380,195 316,202 375,210', '#444');
  line('370,210 440,218 507,227', '#3040c8', 3);
  line('507,227 480,235 498,238 492,243 512,246 512,254 460,258 400,263 340,270 362,272 340,277 382,283 320,285 265,297 310,293 288,303 322,308 290,313 320,317 284,325 310,323 350,335 404,348 384,351 388,345 340,358 290,366 250,375 226,377', '#444');
  line('226,380 252,384 250,391 289,394 340,402 400,410 480,418 482,424 440,423', '#30a040', 3);
  line('440,423 400,437 330,450 345,452 300,465 270,468 195,484 175,484 193,488 173,492 193,495 155,499 155,507 226,517 226,526 282,532 275,540 312,545 318,552 380,558 345,568 395,577 340,585 348,593 318,595 335,600 310,610 335,611 290,623 260,632 220,640 215,645 192,649 216,655 196,668 226,672 230,679 330,689', '#444');
  line('330,689 380,693 368,702 420,710 466,720 483,725 470,733 440,738 432,745 460,752 475,758 420,764 378,768 350,776 325,785 292,793 325,795 300,803 309,808 404,826 465,843 480,844 482,855 455,862 440,872 401,881 360,888 345,900 362,905 345,915 378,916', '#a88420', 3);
  line('375,920 380,930 362,932 385,940 330,944 280,955 220,964 185,976 166,982 186,988 180,995 263,1001 305,1003 360,1015 420,1030 450,1036 418,1040 432,1048 400,1056 350,1068', '#444');
  line('352,1066 325,1075 280,1085 222,1088 256,1092 226,1100 178,1108 200,1112 180,1126 210,1132 250,1140 283,1145 330,1158 308,1165 335,1170 312,1176 335,1182 310,1190 340,1193 308,1201 340,1205 332,1220 345,1225 322,1235 335,1243 290,1248 270,1258 232,1268 263,1277 292,1283 282,1290 308,1295 276,1302 298,1305', '#c03848', 3.4);
  [[392, 157], [507, 227], [289, 394], [370, 702], [466, 720], [460, 755], [309, 807], [404, 826], [466, 844], [455, 862], [401, 881], [378, 916], [263, 1001], [449, 1036], [283, 1145], [308, 1201], [332, 1220], [263, 1277]]
    .forEach(([x, y]) => add(g, 'circle', { cx: x, cy: y, r: 6, fill: '#111' }));
  const t = (x, y, s, size, a, fill, w) => add(g, 'text', { x, y, 'font-size': size, 'text-anchor': a, fill, 'font-weight': w || 700 }, s);
  [[82, '1942', 103], [1, '1960', 359], [1, '1967', 459], [82, '1971', 521], [82, '1977', 621], [82, '1980', 671], [82, '1988', 811], [1, '1991', 865], [82, '1997', 972], [82, '2005', 1112], [82, '2012', 1243], [82, '2016', 1317]]
    .forEach(([x, s, y]) => t(x === 1 ? 641 : x, y, s, 23, x === 1 ? 'end' : 'start', '#b0b0b0'));
  t(82, 1293, '2015', 16, 'start', '#b8b8b8');
  [['Ray Eloit', '83-73-11', 104], ['Bob Blackman', '29-36-1', 521], ['Gary Moeller', '6-24-3', 622], ['Mike White', '47-41-3', 672], ['John Mackovic', '24-11-1', 811], ['Ron Turner', '35-57', 972], ['Ron Zook', '35-51', 1112], ['Tim Beckman', '12-25', 1243], ['Lovie Smith', '2-5', 1317]]
    .forEach(([n, r, y]) => { t(642, y, n, 24, 'end', '#111'); t(642, y + 18, r, 19, 'end', '#111', 400); });
  [['Pete Elliott', '31-34-1', 359], ['Jim Valek', '8-32', 459], ['Lou Tepper', '31-36-2', 865]]
    .forEach(([n, r, y]) => { t(82, y, n, 24, 'start', '#111'); t(82, y + 18, r, 19, 'start', '#111', 400); });
  t(642, 1292, 'Bill Cubit · 5-7', 15, 'end', '#222');
  [[399, 152, 'Rose Bowl (W)'], [513, 222, 'Rose Bowl (W)'], [295, 389, 'Rose Bowl (W)'], [257, 711, 'Liberty Bowl (L)'], [471, 715, 'Rose Bowl (L)'], [467, 770, 'Peach Bowl (L)'], [156, 816, 'All-American Bowl (L)'], [291, 835, 'Citrus Bowl (W)'], [315, 855, 'Hall of Fame Bowl (L)'], [461, 878, 'Sun Bowl (L)'], [408, 896, 'Holiday Bowl (L)'], [384, 911, 'Liberty Bowl (W)'], [269, 997, 'Micron PC Bowl (W)'], [455, 1033, 'Sugar Bowl (L)'], [290, 1140, 'Rose Bowl (L)'], [198, 1209, 'Texas Bowl (W)'], [338, 1216, 'Fight Hunger Bowl (W)'], [270, 1272, 'Heart of Dallas Bowl (L)']]
    .forEach(([x, y, s]) => t(x, y, s, 14, 'start', '#222'));
  t(288, 152, "Illini's First Bowl", 13.5, 'end', '#a08020');
  t(288, 165, '(1946, 8-2 record)', 13.5, 'end', '#a08020');
  t(418, 235, 'Undefeated, National Champs', 13.5, 'end', '#3040c8');
  t(418, 249, '(1951, 9-0-1 record)', 13.5, 'end', '#3040c8');
  t(367, 416, "'63 - '65: Three consecutive", 13.5, 'end', '#309040');
  t(367, 429, 'winning seasons & bowl', 13.5, 'end', '#309040');
  t(390, 736, '9 bowl games in 12 years', 13.5, 'end', '#a08020');
  t(390, 752, "('82-'94, 85-63-4 record)", 13.5, 'end', '#a08020');
  t(373, 1168, 'Longest <50% streak:', 13.5, 'start', '#e03040');
  t(373, 1182, '13 seasons 2003-??', 13.5, 'start', '#e03040');
})();
```
